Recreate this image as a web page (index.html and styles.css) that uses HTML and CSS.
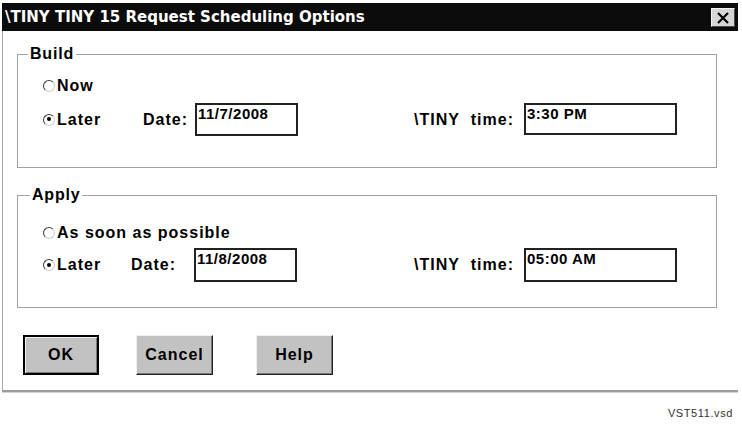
FILE: index.html
```html
<!DOCTYPE html>
<html lang="en">
  <head>
    <meta charset="UTF-8" />
    <title>Request Scheduling Options</title>
    <link rel="stylesheet" href="styles.css">
  </head>
  <body>
    <div id="window">
      <div class="titlebar">
        <span class="title">\TINY TINY 15 Request Scheduling Options</span>
        <button class="btn-x">
          <svg width="14" height="12" viewBox="0 0 14 12">
            <path d="M2 1 L12 11 M12 1 L2 11" stroke="#000" stroke-width="2.2" fill="none" />
          </svg>
        </button>
      </div>
      <div class="dialog">
        <fieldset class="group group-build">
          <legend>Build</legend>
          <div class="row row-first">
            <span class="radio"></span><span class="opt">Now</span>
          </div>
          <div class="row row-later">
            <div class="later"><span class="radio on"></span><span class="opt">Later</span></div>
            <span class="lbl-date">Date:</span>
            <span class="field field-date">11/7/2008</span>
            <span class="lbl-time">\TINY&nbsp; time:</span>
            <span class="field field-time">3:30 PM</span>
          </div>
        </fieldset>

        <fieldset class="group group-apply">
          <legend>Apply</legend>
          <div class="row row-first">
            <span class="radio"></span><span class="opt">As soon as possible</span>
          </div>
          <div class="row row-later">
            <div class="later"><span class="radio on"></span><span class="opt">Later</span></div>
            <span class="lbl-date">Date:</span>
            <span class="field field-date">11/8/2008</span>
            <span class="lbl-time">\TINY&nbsp; time:</span>
            <span class="field field-time">05:00 AM</span>
          </div>
        </fieldset>

        <div class="buttons">
          <button class="btn btn-ok">OK</button>
          <button class="btn btn-cancel">Cancel</button>
          <button class="btn btn-help">Help</button>
        </div>
      </div>
    </div>
    <div class="footer">VST511.vsd</div>
  </body>
</html>
```

FILE: styles.css
```css
* {
  box-sizing: border-box;
}
html,
body {
  margin: 0;
  padding: 0;
  background: #fff;
  font-family: 'Liberation Sans', Arial, sans-serif;
  color: #000;
}
#window {
  margin: 3px 0 0 2px;
  width: 736px;
}
.titlebar {
  display: flex;
  justify-content: space-between;
  align-items: center;
  height: 28px;
  padding: 0 3px 0 3px;
  background: #0c0c0c;
}
.title {
  font-family: 'DejaVu Sans', Verdana, sans-serif;
  font-weight: bold;
  font-size: 15px;
  color: #fff;
  white-space: nowrap;
}
.btn-x {
  display: flex;
  justify-content: center;
  align-items: center;
  width: 24px;
  height: 19px;
  padding: 0;
  margin-top: 1px;
  background: #d6d6d6;
  border: 1px solid;
  border-color: #f4f4f4 #4a4a4a #4a4a4a #f4f4f4;
}
.dialog {
  padding: 14px 0 15px 0;
  border-left: 1px solid #a6a6a6;
  border-bottom: 2px solid #9c9c9c;
  box-shadow: 0 1px 0 #d4d4d4;
}
.group {
  margin: 0 21px 0 14px;
  padding: 0 0 0 25px;
  border: 1px solid #a0a0a0;
}
.group legend {
  padding: 0 2px;
  margin-left: -15px;
  font-weight: bold;
  font-size: 16px;
  line-height: 18px;
  letter-spacing: 0.8px;
}
.group-apply {
  margin-top: 18px;
}
.group-apply legend {
  margin-left: -13px;
}
.row {
  display: flex;
  align-items: center;
  font-weight: bold;
  font-size: 16px;
  letter-spacing: 1px;
}
.row-first {
  height: 20px;
}
.group-build .row-first {
  margin-top: 13px;
}
.group-build .row-later {
  margin-top: 7px;
  margin-bottom: 31px;
}
.group-apply .row-first {
  margin-top: 19px;
}
.group-apply .row-later {
  margin-top: 5px;
  margin-bottom: 25px;
}
.radio {
  position: relative;
  flex: none;
  width: 12px;
  height: 12px;
  margin-right: 2px;
  border-radius: 50%;
  border: 1.5px solid;
  border-color: #3a3a3a #cfcfcf #cfcfcf #3a3a3a;
  background: #fff;
}
.radio.on:after {
  content: '';
  position: absolute;
  left: 2.5px;
  top: 2.5px;
  width: 4px;
  height: 4px;
  border-radius: 50%;
  background: #000;
}
.later {
  display: flex;
  align-items: center;
}
.group-build .later {
  width: 100px;
}
.group-apply .later {
  width: 88px;
}
.group-build .lbl-date {
  width: 52px;
}
.group-apply .lbl-date {
  width: 63px;
}
.field {
  border: 2px solid #222;
  padding: 1px 1px;
  line-height: 16px;
  font-size: 15px;
  letter-spacing: 0.5px;
  align-self: flex-start;
}
.field-date {
  width: 103px;
  height: 33px;
}
.field-time {
  width: 153px;
  height: 32px;
}
.group-apply .field {
  height: 34px;
}
.lbl-time {
  padding-right: 10px;
  text-align: right;
  white-space: nowrap;
}
.group-build .lbl-time {
  width: 226px;
}
.group-apply .lbl-time {
  width: 227px;
}
.buttons {
  display: flex;
  margin-top: 27px;
  padding-left: 20px;
}
.btn {
  width: 77px;
  height: 40px;
  padding: 0;
  font-family: 'Liberation Sans', Arial, sans-serif;
  font-weight: bold;
  font-size: 16px;
  letter-spacing: 1px;
  color: #000;
  background: #c2c2c2;
  border: 1px solid;
  border-color: #f0f0f0 #222 #222 #f0f0f0;
  box-shadow: inset -1px -1px 0 #7a7a7a;
}
.btn-ok {
  width: 76px;
  border: 2px solid #000;
  box-shadow: inset 1px 1px 0 #f0f0f0, inset -1px -1px 0 #7a7a7a;
}
.btn-cancel {
  margin-left: 37px;
}
.btn-help {
  margin-left: 43px;
}
.footer {
  margin-top: 15px;
  padding-right: 9px;
  text-align: right;
  font-size: 11px;
  letter-spacing: 0.6px;
  color: #333;
}
```
